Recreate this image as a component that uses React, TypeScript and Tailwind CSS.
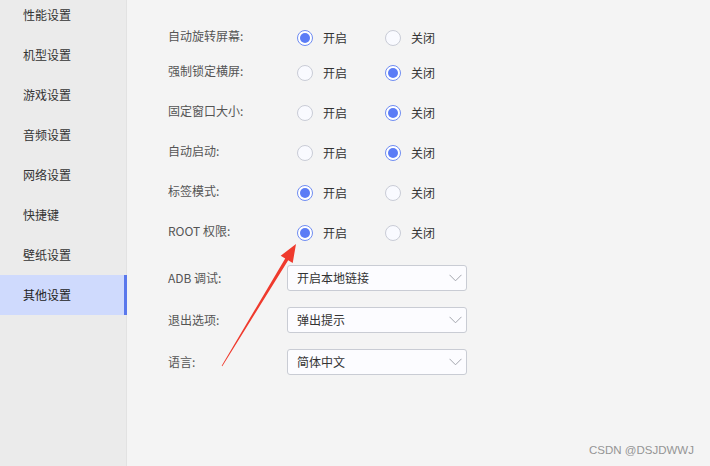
import React from "react";

const font = { fontFamily: '"Microsoft YaHei", "Noto Sans CJK SC", "Noto Sans", sans-serif' };

const navItems = ["性能设置", "机型设置", "游戏设置", "音频设置", "网络设置", "快捷键", "壁纸设置", "其他设置"];

const radioRows: { label: string; on: boolean; first?: boolean }[] = [
  { label: "自动旋转屏幕:", on: true, first: true },
  { label: "强制锁定横屏:", on: false },
  { label: "固定窗口大小:", on: false },
  { label: "自动启动:", on: false },
  { label: "标签模式:", on: true },
  { label: "ROOT 权限:", on: true },
];

const selectRows = [
  { label: "ADB 调试:", value: "开启本地链接" },
  { label: "退出选项:", value: "弹出提示" },
  { label: "语言:", value: "简体中文" },
];

function Radio({ checked, text }: { checked: boolean; text: string }) {
  return (
    <div className="flex items-center w-[88px]">
      {checked ? (
        <span className="w-4 h-4 rounded-full border border-[#6f8cf2] bg-white flex items-center justify-center">
          <span className="w-[10px] h-[10px] rounded-full bg-[#5b7cf6]" />
        </span>
      ) : (
        <span className="w-4 h-4 rounded-full border border-[#c9ccd6] bg-[#f9faff]" />
      )}
      <span className="ml-[10px] text-[12px] text-[#333]">{text}</span>
    </div>
  );
}

function Chevron() {
  return (
    <svg width="13" height="8" viewBox="0 0 13 8" fill="none">
      <path d="M0.5 0.8 L6.5 6.8 L12.5 0.8" stroke="#a3a6ad" strokeWidth="1" />
    </svg>
  );
}

export default function App() {
  return (
    <div className="relative w-[710px] h-[466px] overflow-hidden flex bg-[#f4f4f4]" style={font}>
      {/* SIDEBAR */}
      <div className="w-[127px] h-full bg-[#ebebeb] border-r border-[#e2e2e2] shrink-0">
        <div className="-mt-[5px]">
          {navItems.map((n, i) => (
            <div
              key={n}
              className={
                i === 7
                  ? "h-10 flex items-center pl-[23px] text-[12px] text-[#222] bg-[#cfdafd] border-r-[3px] border-[#5a78ec] -mr-px"
                  : "h-10 flex items-center pl-[23px] text-[12px] text-[#333]"
              }
            >
              {n}
            </div>
          ))}
        </div>
      </div>

      {/* CONTENT */}
      <div className="flex-1 pl-[41px] pt-[23px]">
        {radioRows.map((r) => (
          <div key={r.label} className={r.first ? "h-[30px] flex items-center" : "h-10 flex items-center"}>
            <div className="w-[129px] text-[12px] text-[#555] -mt-[5px]">{r.label}</div>
            <Radio checked={r.on} text="开启" />
            <Radio checked={!r.on} text="关闭" />
          </div>
        ))}

        <div className="mt-3 flex flex-col gap-4">
          {selectRows.map((s) => (
            <div key={s.label} className="h-[26px] flex items-center">
              <div className="w-[119px] text-[12px] text-[#555]">{s.label}</div>
              <div className="w-[180px] h-[26px] border border-[#c9ccd4] rounded-[3px] bg-[#fcfcff] flex items-center justify-between pl-[9px] pr-[4px]">
                <span className="text-[12px] text-[#333]">{s.value}</span>
                <Chevron />
              </div>
            </div>
          ))}
        </div>
      </div>

      {/* annotation arrow */}
      <svg className="absolute left-0 top-0 pointer-events-none" width="710" height="466" viewBox="0 0 710 466">
        <polygon
          points="221.7,365.8 285.2,258.5 280.7,255.8 296,244 292.7,263 288.2,260.3 222.3,366.2"
          fill="#ef3a2d"
        />
      </svg>

      {/* watermark */}
      <div
        className="absolute left-[589px] top-[442px] text-[11.5px] text-[#959595]"
        style={{ fontFamily: '"Liberation Sans", "Noto Sans", sans-serif' }}
      >
        CSDN @DSJDWWJ
      </div>
    </div>
  );
}
